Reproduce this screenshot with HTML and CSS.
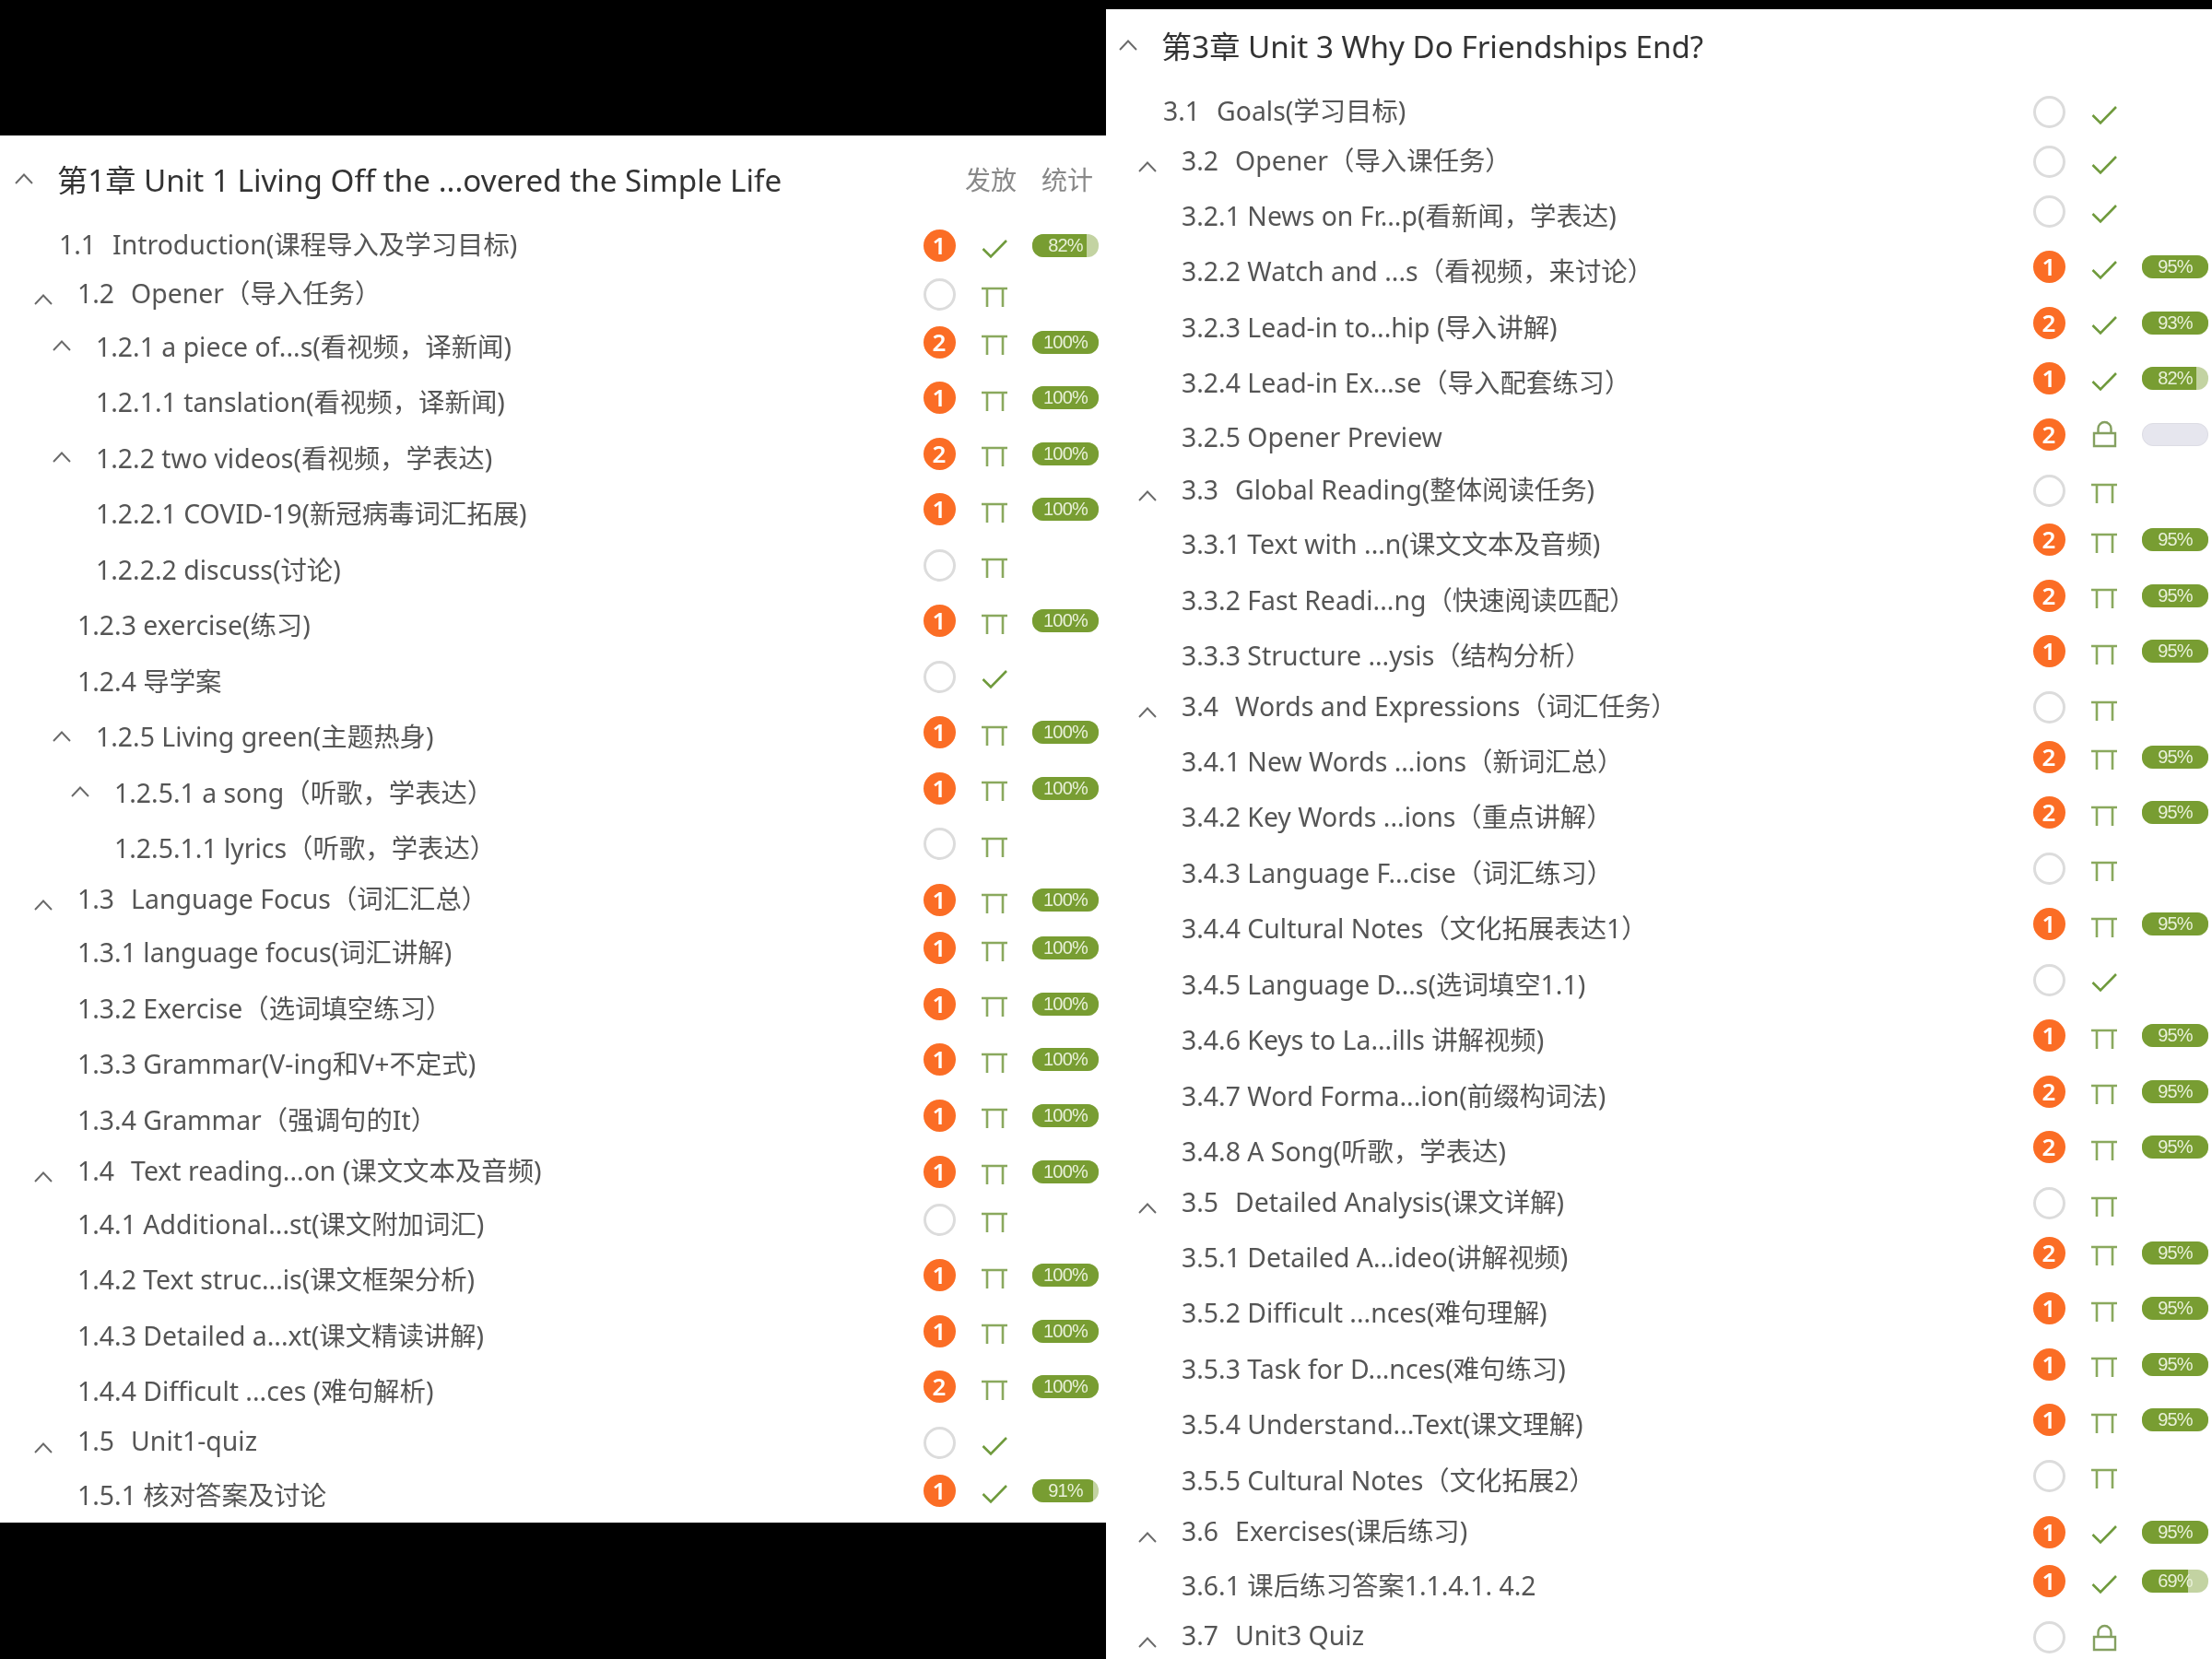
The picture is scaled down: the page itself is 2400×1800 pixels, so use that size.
FILE: index.html
```html
<!DOCTYPE html>
<html lang="zh-CN">
<head>
<meta charset="utf-8">
<title>课程目录</title>
<link rel="stylesheet" href="styles.css">
</head>
<body>
<svg class="defs" aria-hidden="true">
  <symbol id="chev" viewBox="0 0 20 12"><path d="M1 11 10 1.500 19 11" fill="none" stroke="#6a6a6a" stroke-width="1.900"/></symbol>
  <symbol id="chk" viewBox="0 0 28 22"><path d="M1.500 11 10 19.500 27 2" fill="none" stroke="#6f9a3c" stroke-width="2.600"/></symbol>
  <symbol id="pi" viewBox="0 0 28 22"><path d="M0 2H28M6 2V22M23 2V22" fill="none" stroke="#8aa95e" stroke-width="2.600"/></symbol>
  <symbol id="lock" viewBox="0 0 28 30"><path d="M3 14H26V28H3ZM7.500 14V9A7 7 0 0 1 21.500 9V14" fill="none" stroke="#84a060" stroke-width="2.400"/></symbol>
</svg>
<main class="sheet">

<section class="panel panel-a">
  <header class="head"><svg class="chev"><use href="#chev"/></svg><h2 class="head-title">第1章 Unit 1 Living Off the ...overed the Simple Life</h2><span class="col">发放</span><span class="col">统计</span></header>

  <div class="row sec l0"><span class="slot"></span><span class="title"><b class="num">1.1</b>Introduction(课程导入及学习目标)</span><div class="ctl"><span class="badge">1</span><svg class="ic"><use href="#chk"/></svg><span class="pill"><i class="fill" style="width:82%"></i><em>82%</em></span></div></div>
  <div class="row sec l1"><span class="slot"><svg class="chev"><use href="#chev"/></svg></span><span class="title"><b class="num">1.2</b>Opener（导入任务）</span><div class="ctl"><span class="ring"></span><svg class="ic"><use href="#pi"/></svg></div></div>
  <div class="row l2"><span class="slot"><svg class="chev"><use href="#chev"/></svg></span><span class="title">1.2.1 a piece of...s(看视频，译新闻)</span><div class="ctl"><span class="badge">2</span><svg class="ic"><use href="#pi"/></svg><span class="pill"><i class="fill" style="width:100%"></i><em>100%</em></span></div></div>
  <div class="row l2"><span class="slot"></span><span class="title">1.2.1.1 tanslation(看视频，译新闻)</span><div class="ctl"><span class="badge">1</span><svg class="ic"><use href="#pi"/></svg><span class="pill"><i class="fill" style="width:100%"></i><em>100%</em></span></div></div>
  <div class="row l2"><span class="slot"><svg class="chev"><use href="#chev"/></svg></span><span class="title">1.2.2 two videos(看视频，学表达)</span><div class="ctl"><span class="badge">2</span><svg class="ic"><use href="#pi"/></svg><span class="pill"><i class="fill" style="width:100%"></i><em>100%</em></span></div></div>
  <div class="row l2"><span class="slot"></span><span class="title">1.2.2.1 COVID-19(新冠病毒词汇拓展)</span><div class="ctl"><span class="badge">1</span><svg class="ic"><use href="#pi"/></svg><span class="pill"><i class="fill" style="width:100%"></i><em>100%</em></span></div></div>
  <div class="row l2"><span class="slot"></span><span class="title">1.2.2.2 discuss(讨论)</span><div class="ctl"><span class="ring"></span><svg class="ic"><use href="#pi"/></svg></div></div>
  <div class="row l1"><span class="slot"></span><span class="title">1.2.3 exercise(练习)</span><div class="ctl"><span class="badge">1</span><svg class="ic"><use href="#pi"/></svg><span class="pill"><i class="fill" style="width:100%"></i><em>100%</em></span></div></div>
  <div class="row l1"><span class="slot"></span><span class="title">1.2.4 导学案</span><div class="ctl"><span class="ring"></span><svg class="ic"><use href="#chk"/></svg></div></div>
  <div class="row l2"><span class="slot"><svg class="chev"><use href="#chev"/></svg></span><span class="title">1.2.5 Living green(主题热身)</span><div class="ctl"><span class="badge">1</span><svg class="ic"><use href="#pi"/></svg><span class="pill"><i class="fill" style="width:100%"></i><em>100%</em></span></div></div>
  <div class="row l3"><span class="slot"><svg class="chev"><use href="#chev"/></svg></span><span class="title">1.2.5.1 a song（听歌，学表达）</span><div class="ctl"><span class="badge">1</span><svg class="ic"><use href="#pi"/></svg><span class="pill"><i class="fill" style="width:100%"></i><em>100%</em></span></div></div>
  <div class="row l3"><span class="slot"></span><span class="title">1.2.5.1.1 lyrics（听歌，学表达）</span><div class="ctl"><span class="ring"></span><svg class="ic"><use href="#pi"/></svg></div></div>
  <div class="row sec l1"><span class="slot"><svg class="chev"><use href="#chev"/></svg></span><span class="title"><b class="num">1.3</b>Language Focus（词汇汇总）</span><div class="ctl"><span class="badge">1</span><svg class="ic"><use href="#pi"/></svg><span class="pill"><i class="fill" style="width:100%"></i><em>100%</em></span></div></div>
  <div class="row l1"><span class="slot"></span><span class="title">1.3.1 language focus(词汇讲解)</span><div class="ctl"><span class="badge">1</span><svg class="ic"><use href="#pi"/></svg><span class="pill"><i class="fill" style="width:100%"></i><em>100%</em></span></div></div>
  <div class="row l1"><span class="slot"></span><span class="title">1.3.2 Exercise（选词填空练习）</span><div class="ctl"><span class="badge">1</span><svg class="ic"><use href="#pi"/></svg><span class="pill"><i class="fill" style="width:100%"></i><em>100%</em></span></div></div>
  <div class="row l1"><span class="slot"></span><span class="title">1.3.3 Grammar(V-ing和V+不定式)</span><div class="ctl"><span class="badge">1</span><svg class="ic"><use href="#pi"/></svg><span class="pill"><i class="fill" style="width:100%"></i><em>100%</em></span></div></div>
  <div class="row l1"><span class="slot"></span><span class="title">1.3.4 Grammar（强调句的It）</span><div class="ctl"><span class="badge">1</span><svg class="ic"><use href="#pi"/></svg><span class="pill"><i class="fill" style="width:100%"></i><em>100%</em></span></div></div>
  <div class="row sec l1"><span class="slot"><svg class="chev"><use href="#chev"/></svg></span><span class="title"><b class="num">1.4</b>Text reading...on (课文文本及音频)</span><div class="ctl"><span class="badge">1</span><svg class="ic"><use href="#pi"/></svg><span class="pill"><i class="fill" style="width:100%"></i><em>100%</em></span></div></div>
  <div class="row l1"><span class="slot"></span><span class="title">1.4.1 Additional...st(课文附加词汇)</span><div class="ctl"><span class="ring"></span><svg class="ic"><use href="#pi"/></svg></div></div>
  <div class="row l1"><span class="slot"></span><span class="title">1.4.2 Text struc...is(课文框架分析)</span><div class="ctl"><span class="badge">1</span><svg class="ic"><use href="#pi"/></svg><span class="pill"><i class="fill" style="width:100%"></i><em>100%</em></span></div></div>
  <div class="row l1"><span class="slot"></span><span class="title">1.4.3 Detailed a...xt(课文精读讲解)</span><div class="ctl"><span class="badge">1</span><svg class="ic"><use href="#pi"/></svg><span class="pill"><i class="fill" style="width:100%"></i><em>100%</em></span></div></div>
  <div class="row l1"><span class="slot"></span><span class="title">1.4.4 Difficult ...ces (难句解析)</span><div class="ctl"><span class="badge">2</span><svg class="ic"><use href="#pi"/></svg><span class="pill"><i class="fill" style="width:100%"></i><em>100%</em></span></div></div>
  <div class="row sec l1"><span class="slot"><svg class="chev"><use href="#chev"/></svg></span><span class="title"><b class="num">1.5</b>Unit1-quiz</span><div class="ctl"><span class="ring"></span><svg class="ic"><use href="#chk"/></svg></div></div>
  <div class="row l1"><span class="slot"></span><span class="title">1.5.1 核对答案及讨论</span><div class="ctl"><span class="badge">1</span><svg class="ic"><use href="#chk"/></svg><span class="pill"><i class="fill" style="width:91%"></i><em>91%</em></span></div></div>
</section>

<section class="panel panel-b">
  <header class="head"><svg class="chev"><use href="#chev"/></svg><h2 class="head-title">第3章 Unit 3 Why Do Friendships End?</h2></header>

  <div class="row sec l0"><span class="slot"></span><span class="title"><b class="num">3.1</b>Goals(学习目标)</span><div class="ctl"><span class="ring"></span><svg class="ic"><use href="#chk"/></svg></div></div>
  <div class="row sec l1"><span class="slot"><svg class="chev"><use href="#chev"/></svg></span><span class="title"><b class="num">3.2</b>Opener（导入课任务）</span><div class="ctl"><span class="ring"></span><svg class="ic"><use href="#chk"/></svg></div></div>
  <div class="row l1"><span class="slot"></span><span class="title">3.2.1 News on Fr...p(看新闻，学表达)</span><div class="ctl"><span class="ring"></span><svg class="ic"><use href="#chk"/></svg></div></div>
  <div class="row l1"><span class="slot"></span><span class="title">3.2.2 Watch and ...s（看视频，来讨论）</span><div class="ctl"><span class="badge">1</span><svg class="ic"><use href="#chk"/></svg><span class="pill"><i class="fill" style="width:100%"></i><em>95%</em></span></div></div>
  <div class="row l1"><span class="slot"></span><span class="title">3.2.3 Lead-in to...hip (导入讲解)</span><div class="ctl"><span class="badge">2</span><svg class="ic"><use href="#chk"/></svg><span class="pill"><i class="fill" style="width:100%"></i><em>93%</em></span></div></div>
  <div class="row l1"><span class="slot"></span><span class="title">3.2.4 Lead-in Ex...se（导入配套练习）</span><div class="ctl"><span class="badge">1</span><svg class="ic"><use href="#chk"/></svg><span class="pill"><i class="fill" style="width:82%"></i><em>82%</em></span></div></div>
  <div class="row l1"><span class="slot"></span><span class="title">3.2.5 Opener Preview</span><div class="ctl"><span class="badge">2</span><svg class="ic lk"><use href="#lock"/></svg><span class="pill pill-empty"></span></div></div>
  <div class="row sec l1"><span class="slot"><svg class="chev"><use href="#chev"/></svg></span><span class="title"><b class="num">3.3</b>Global Reading(整体阅读任务)</span><div class="ctl"><span class="ring"></span><svg class="ic"><use href="#pi"/></svg></div></div>
  <div class="row l1"><span class="slot"></span><span class="title">3.3.1 Text with ...n(课文文本及音频)</span><div class="ctl"><span class="badge">2</span><svg class="ic"><use href="#pi"/></svg><span class="pill"><i class="fill" style="width:100%"></i><em>95%</em></span></div></div>
  <div class="row l1"><span class="slot"></span><span class="title">3.3.2 Fast Readi...ng（快速阅读匹配）</span><div class="ctl"><span class="badge">2</span><svg class="ic"><use href="#pi"/></svg><span class="pill"><i class="fill" style="width:100%"></i><em>95%</em></span></div></div>
  <div class="row l1"><span class="slot"></span><span class="title">3.3.3 Structure ...ysis（结构分析）</span><div class="ctl"><span class="badge">1</span><svg class="ic"><use href="#pi"/></svg><span class="pill"><i class="fill" style="width:100%"></i><em>95%</em></span></div></div>
  <div class="row sec l1"><span class="slot"><svg class="chev"><use href="#chev"/></svg></span><span class="title"><b class="num">3.4</b>Words and Expressions（词汇任务）</span><div class="ctl"><span class="ring"></span><svg class="ic"><use href="#pi"/></svg></div></div>
  <div class="row l1"><span class="slot"></span><span class="title">3.4.1 New Words ...ions（新词汇总）</span><div class="ctl"><span class="badge">2</span><svg class="ic"><use href="#pi"/></svg><span class="pill"><i class="fill" style="width:100%"></i><em>95%</em></span></div></div>
  <div class="row l1"><span class="slot"></span><span class="title">3.4.2 Key Words ...ions（重点讲解）</span><div class="ctl"><span class="badge">2</span><svg class="ic"><use href="#pi"/></svg><span class="pill"><i class="fill" style="width:100%"></i><em>95%</em></span></div></div>
  <div class="row l1"><span class="slot"></span><span class="title">3.4.3 Language F...cise（词汇练习）</span><div class="ctl"><span class="ring"></span><svg class="ic"><use href="#pi"/></svg></div></div>
  <div class="row l1"><span class="slot"></span><span class="title">3.4.4 Cultural Notes（文化拓展表达1）</span><div class="ctl"><span class="badge">1</span><svg class="ic"><use href="#pi"/></svg><span class="pill"><i class="fill" style="width:100%"></i><em>95%</em></span></div></div>
  <div class="row l1"><span class="slot"></span><span class="title">3.4.5 Language D...s(选词填空1.1)</span><div class="ctl"><span class="ring"></span><svg class="ic"><use href="#chk"/></svg></div></div>
  <div class="row l1"><span class="slot"></span><span class="title">3.4.6 Keys to La...ills 讲解视频)</span><div class="ctl"><span class="badge">1</span><svg class="ic"><use href="#pi"/></svg><span class="pill"><i class="fill" style="width:100%"></i><em>95%</em></span></div></div>
  <div class="row l1"><span class="slot"></span><span class="title">3.4.7 Word Forma...ion(前缀构词法)</span><div class="ctl"><span class="badge">2</span><svg class="ic"><use href="#pi"/></svg><span class="pill"><i class="fill" style="width:100%"></i><em>95%</em></span></div></div>
  <div class="row l1"><span class="slot"></span><span class="title">3.4.8 A Song(听歌，学表达)</span><div class="ctl"><span class="badge">2</span><svg class="ic"><use href="#pi"/></svg><span class="pill"><i class="fill" style="width:100%"></i><em>95%</em></span></div></div>
  <div class="row sec l1"><span class="slot"><svg class="chev"><use href="#chev"/></svg></span><span class="title"><b class="num">3.5</b>Detailed Analysis(课文详解)</span><div class="ctl"><span class="ring"></span><svg class="ic"><use href="#pi"/></svg></div></div>
  <div class="row l1"><span class="slot"></span><span class="title">3.5.1 Detailed A...ideo(讲解视频)</span><div class="ctl"><span class="badge">2</span><svg class="ic"><use href="#pi"/></svg><span class="pill"><i class="fill" style="width:100%"></i><em>95%</em></span></div></div>
  <div class="row l1"><span class="slot"></span><span class="title">3.5.2 Difficult ...nces(难句理解)</span><div class="ctl"><span class="badge">1</span><svg class="ic"><use href="#pi"/></svg><span class="pill"><i class="fill" style="width:100%"></i><em>95%</em></span></div></div>
  <div class="row l1"><span class="slot"></span><span class="title">3.5.3 Task for D...nces(难句练习)</span><div class="ctl"><span class="badge">1</span><svg class="ic"><use href="#pi"/></svg><span class="pill"><i class="fill" style="width:100%"></i><em>95%</em></span></div></div>
  <div class="row l1"><span class="slot"></span><span class="title">3.5.4 Understand...Text(课文理解)</span><div class="ctl"><span class="badge">1</span><svg class="ic"><use href="#pi"/></svg><span class="pill"><i class="fill" style="width:100%"></i><em>95%</em></span></div></div>
  <div class="row l1"><span class="slot"></span><span class="title">3.5.5 Cultural Notes（文化拓展2）</span><div class="ctl"><span class="ring"></span><svg class="ic"><use href="#pi"/></svg></div></div>
  <div class="row sec l1"><span class="slot"><svg class="chev"><use href="#chev"/></svg></span><span class="title"><b class="num">3.6</b>Exercises(课后练习)</span><div class="ctl"><span class="badge">1</span><svg class="ic"><use href="#chk"/></svg><span class="pill"><i class="fill" style="width:100%"></i><em>95%</em></span></div></div>
  <div class="row l1"><span class="slot"></span><span class="title">3.6.1 课后练习答案1.1.4.1. 4.2</span><div class="ctl"><span class="badge">1</span><svg class="ic"><use href="#chk"/></svg><span class="pill"><i class="fill" style="width:69%"></i><em>69%</em></span></div></div>
  <div class="row sec l1"><span class="slot"><svg class="chev"><use href="#chev"/></svg></span><span class="title"><b class="num">3.7</b>Unit3 Quiz</span><div class="ctl"><span class="ring"></span><svg class="ic lk"><use href="#lock"/></svg></div></div>
</section>

</main>
</body>
</html>
```

FILE: styles.css
```css
* { box-sizing: border-box; }
html, body { margin: 0; height: 1800px; background: #000; overflow: hidden; }
.defs { display: none; }
.sheet {
  display: flex;
  align-items: flex-start;
  width: 2400px;
  height: 1800px;
  font-family: "Noto Sans", "Noto Sans CJK SC", sans-serif;
  color: #555;
}
.panel {
  flex: 0 0 1200px;
  background: #fff;
  filter: blur(0.6px);
  overflow: hidden;
}
.panel-a {
  margin-top: 147px;
  height: 1505px;
  padding: 8px 8px 0 2px;
}
.panel-b {
  margin-top: 10px;
  height: 1790px;
  padding: 0 4px 0 0;
}
.head {
  display: flex;
  align-items: center;
  height: 80px;
  margin-bottom: 5px;
  padding: 0 0 3px 14px;
}
.head .chev { margin-right: 26px; }
.head-title {
  flex: 1;
  margin: 0;
  font-size: 33.2px;
  font-weight: 400;
  color: #333;
  white-space: nowrap;
}
.col { font-size: 28px; color: #888; margin-right: 27px; width: 56px; }
.col:last-child { margin-right: 6px; }
.row {
  display: flex;
  align-items: center;
  height: 60.5px;
}
.row.sec { height: 50px; }
.panel-a .row.sec { margin-bottom: 2.5px; }
.panel-b .row.sec { margin-bottom: 4px; }
.l0 { padding-left: 16px; }
.l1 { padding-left: 36px; }
.l2 { padding-left: 56px; }
.l3 { padding-left: 76px; }
.slot { flex: 0 0 47px; display: flex; align-items: center; margin-left: -1px; }
.chev { width: 20px; height: 12px; flex: none; }
.sec .chev { margin-top: 14px; }
.title {
  flex: 1;
  min-width: 0;
  font-size: 28.4px;
  white-space: nowrap;
  padding-bottom: 2px;
}
.sec .title { padding-bottom: 3px; }
.num { font-weight: 400; margin-right: 18px; }
.ctl {
  display: grid;
  grid-template-columns: 36px 28px 72px;
  column-gap: 28px;
  align-items: center;
  width: 192px;
  height: 36px;
  margin-bottom: 8px;
}
.sec .ctl { margin-bottom: 0; margin-top: 3px; }
.badge, .ring {
  width: 35px;
  height: 35px;
  margin-left: 1.500px;
  border-radius: 50%;
}
.badge {
  background: #fb6d25;
  color: #fff;
  font-size: 26px;
  font-weight: 600;
  line-height: 35px;
  text-align: center;
}
.ring { border: 3px solid #dcdcdc; }
.ic { width: 28px; height: 22px; margin: 6px 0 0 0.500px; }
.ic.lk { height: 30px; margin-top: 0; }
.pill {
  position: relative;
  display: block;
  height: 25px;
  border-radius: 12px;
  background: #c3d3a2;
  overflow: hidden;
}
.pill-empty { background: #e6e6ee; border: 1px solid #dcdce4; }
.fill { position: absolute; left: 0; top: 0; bottom: 0; background: #789d32; }
.pill em {
  position: relative;
  display: block;
  font-family: "Liberation Sans", sans-serif;
  font-style: normal;
  font-size: 20px;
  letter-spacing: -0.8px;
  line-height: 25px;
  color: #e8f0d8;
  text-align: center;
}
```
